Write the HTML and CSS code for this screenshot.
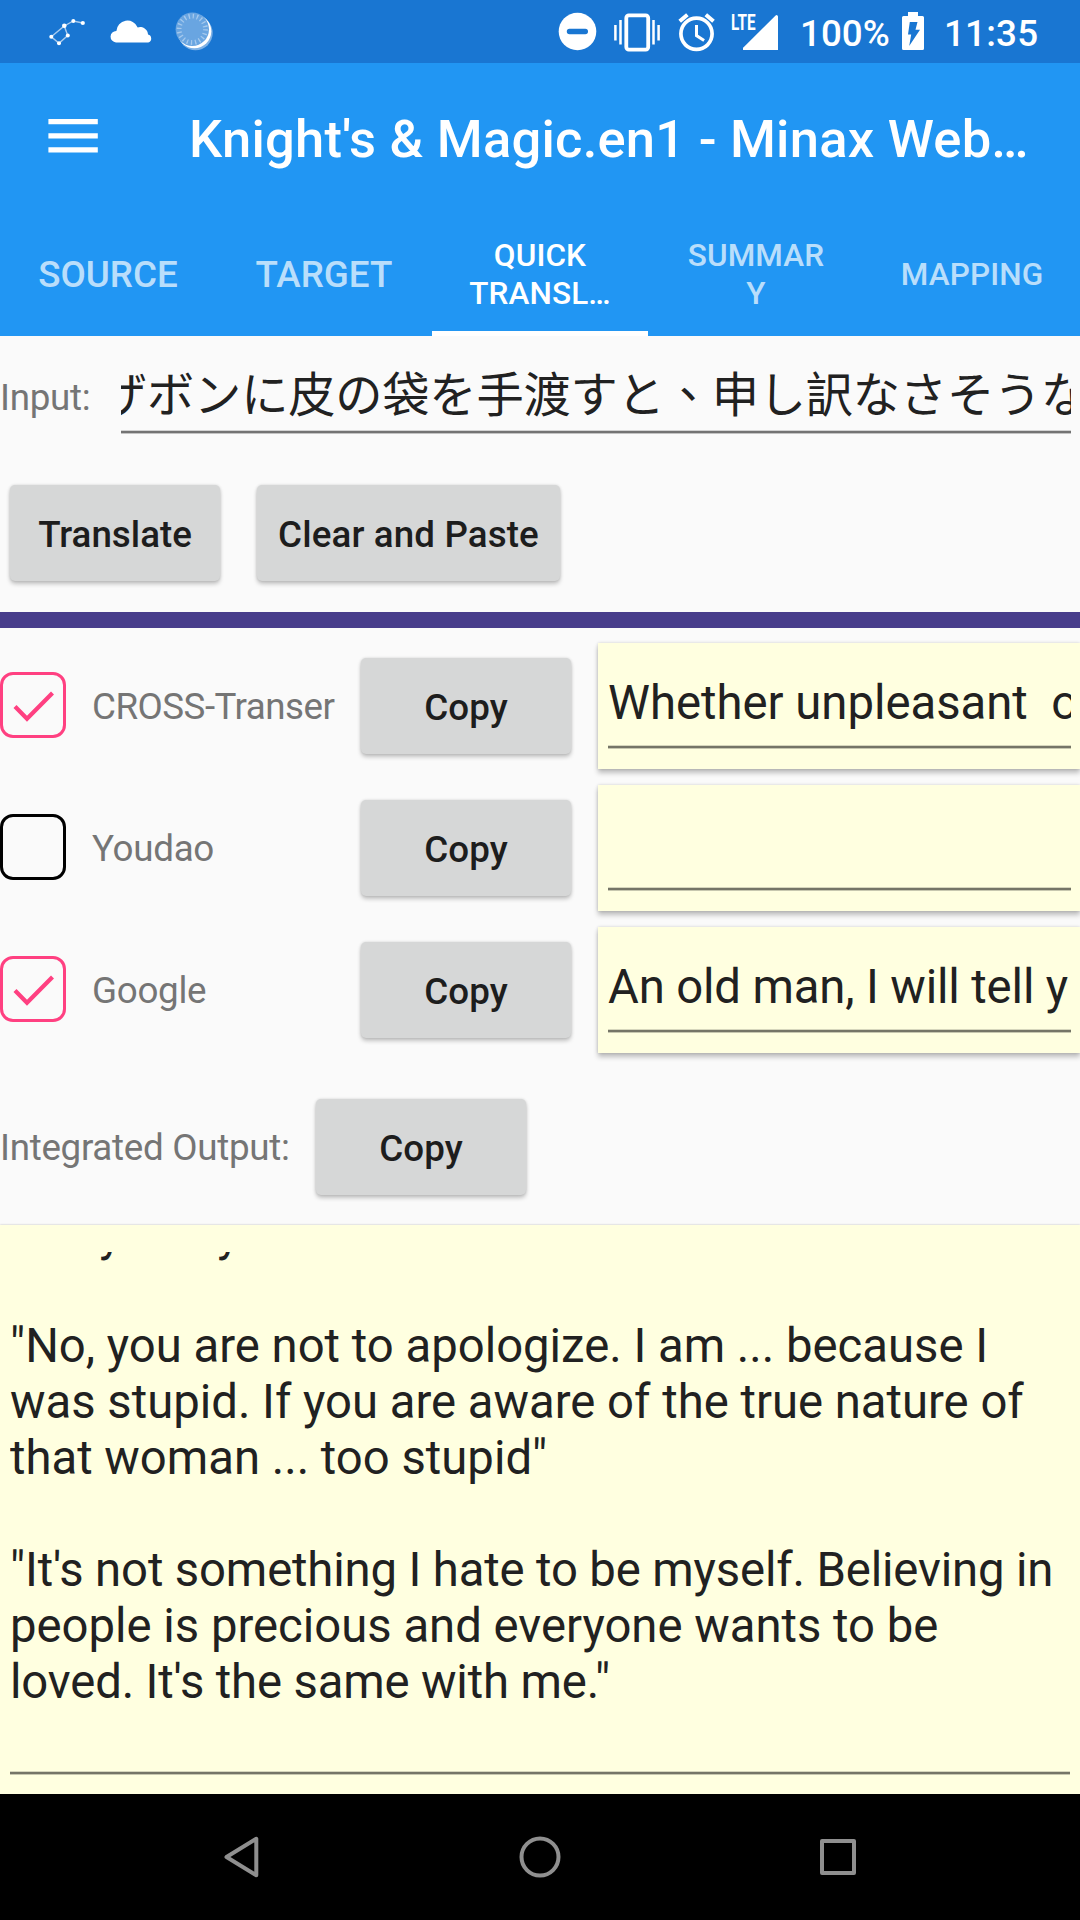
FILE: index.html
```html
<!DOCTYPE html>
<html lang="en">
<head>
<meta charset="utf-8">
<title>Minax Web Translator</title>
<link rel="stylesheet" href="styles.css">
</head>
<body>
<div class="status-bar">
  <div class="status-left">
    <svg width="36" height="32" viewBox="49 15 36 32">
      <path d="M51.3 35.7 64.3 25 67.7 34.5 59 42.2zM64.3 25 73.3 20 82.7 22" fill="none" stroke="#a9cbee" stroke-width="1.4"/>
      <g fill="#fff"><circle cx="51.3" cy="35.7" r="2"/><circle cx="59" cy="42.2" r="2"/><circle cx="67.8" cy="34.5" r="2"/><circle cx="64.3" cy="24.8" r="2.3"/><circle cx="73.3" cy="20" r="2"/><circle cx="82.8" cy="22" r="2.1"/></g>
    </svg>
    <svg width="42" height="24" viewBox="110 18 42 24">
      <path d="M116 41.4a5.4 5.4 0 0 1 .4-11.3 11.1 11.1 0 0 1 21.3-3.7 7.8 7.8 0 0 1 10.3 7.2 4 4 0 0 1 .2 7.8z" fill="#fff"/>
    </svg>
    <svg width="38" height="40" viewBox="175 11 38 40">
      <circle cx="195.5" cy="33" r="17.2" fill="#7fb2e6"/>
      <circle cx="194.3" cy="31.3" r="17" fill="#fff"/>
      <circle cx="192.3" cy="29.3" r="16.7" fill="#69a5e1"/>
      <circle cx="192.3" cy="29.3" r="13.2" fill="none" stroke="#a5c9ed" stroke-width="4.8" stroke-dasharray="1.3 2.847"/>
    </svg>
  </div>
  <div class="status-right">
    <svg width="39" height="39" viewBox="558 12 39 39">
      <circle cx="577.5" cy="31.5" r="18.8" fill="#fff"/>
      <rect x="566.8" y="28.8" width="21.2" height="5.4" rx="2.7" fill="#1976d2"/>
    </svg>
    <svg class="icon-vibrate" width="48" height="40" viewBox="613 11 48 40">
      <rect x="626.3" y="14.4" width="21.9" height="34.2" rx="2.5" fill="none" stroke="#fff" stroke-width="3.8"/>
      <path d="M620.5 19v24.6M615.4 24v15.6M653.5 19v24.6M658.6 24v15.6" stroke="#fff" stroke-width="2.5"/>
    </svg>
    <svg class="icon-alarm" width="38" height="40" viewBox="678 11 38 40">
      <circle cx="696.5" cy="32.8" r="15.6" fill="none" stroke="#fff" stroke-width="3.7"/>
      <path d="M696.5 24v10.6l7.6 4.8" fill="none" stroke="#fff" stroke-width="3"/>
      <path d="M679.7 20.2 687.4 13.7M713.5 20.2 705.8 13.7" stroke="#fff" stroke-width="4"/>
    </svg>
    <div class="signal">
      <span class="lte">LTE</span>
      <svg width="36" height="36" viewBox="743 14 36 36"><path d="M744.3 50a1 1 0 0 1-.9-2.6L775.6 15.4a1.5 1.5 0 0 1 2.4 1V50z" fill="#fff"/></svg>
    </div>
    <span class="battery-level">100%</span>
    <svg class="icon-battery" width="22" height="38" viewBox="902 12 22 38">
      <path d="M908 12h10v4h4.5a1.5 1.5 0 0 1 1.5 1.5V48.5a1.5 1.5 0 0 1-1.5 1.5h-19a1.5 1.5 0 0 1-1.5-1.5V17.5a1.5 1.5 0 0 1 1.5-1.5H908z" fill="#fff"/>
      <path d="M909.8 22h7.7l-2 7.7h4.5L909.2 46l2-11.5H908z" fill="#1976d2"/>
    </svg>
    <span class="clock">11:35</span>
  </div>
</div>

<header class="app-bar">
  <div class="toolbar">
    <svg class="menu" width="50" height="34" viewBox="0 0 50 34"><path d="M.4 2.7h49.4M.4 16.8h49.4M.4 30.9h49.4" stroke="#fff" stroke-width="5.3"/></svg>
    <h1 class="title">Knight's &amp; Magic.en1 - Minax Web…</h1>
  </div>
  <nav class="tabs">
    <div class="tab">SOURCE</div>
    <div class="tab">TARGET</div>
    <div class="tab small active">QUICK<br>TRANSL…</div>
    <div class="tab small">SUMMAR<br>Y</div>
    <div class="tab small">MAPPING</div>
  </nav>
</header>

<main>
  <div class="input-row">
    <label class="label">Input:</label>
    <div class="field"><div class="field-text jp" lang="zh-TW"><span>ザボンに皮の袋を手渡すと、申し訳なさそうな</span></div></div>
  </div>
  <div class="actions">
    <button class="btn">Translate</button>
    <button class="btn wide">Clear and Paste</button>
  </div>
  <div class="divider"></div>

  <section class="engines">
    <div class="engine">
      <span class="check on"><svg width="66" height="66"><path d="M15 34.5 27 46.8 52.5 21" fill="none" stroke="#ff4081" stroke-width="4.2"/></svg></span>
      <span class="label condensed">CROSS-Transer</span>
      <button class="btn">Copy</button>
      <div class="card"><div class="field"><div class="field-text">Whether unpleasant&nbsp; or</div></div></div>
    </div>
    <div class="engine">
      <span class="check"></span>
      <span class="label">Youdao</span>
      <button class="btn">Copy</button>
      <div class="card"><div class="field"><div class="field-text"></div></div></div>
    </div>
    <div class="engine">
      <span class="check on"><svg width="66" height="66"><path d="M15 34.5 27 46.8 52.5 21" fill="none" stroke="#ff4081" stroke-width="4.2"/></svg></span>
      <span class="label">Google</span>
      <button class="btn">Copy</button>
      <div class="card"><div class="field"><div class="field-text tight">An old man, I will tell y</div></div></div>
    </div>
  </section>

  <div class="output-row">
    <span class="label">Integrated Output:</span>
    <button class="btn">Copy</button>
  </div>
  <div class="output">
    <div class="output-text">
      <p>really sorry</p>
      <p>"No, you are not to apologize. I am ... because I<br>was stupid. If you are aware of the true nature of<br>that woman ... too stupid"</p>
      <p><span class="tight">"It's not something I hate to be myself. Believing in</span><br>people is precious and everyone wants to be<br><span class="tight">loved. It's the same with me."</span></p>
    </div>
  </div>
</main>

<footer class="nav-bar">
  <svg width="38" height="44" viewBox="0 0 38 44"><path d="M34.3 3.8v36.4L4.5 22z" fill="none" stroke="#8f8f8f" stroke-width="4" stroke-linejoin="round"/></svg>
  <svg width="44" height="44" viewBox="0 0 44 44"><circle cx="22" cy="22" r="18.5" fill="none" stroke="#8f8f8f" stroke-width="4"/></svg>
  <svg width="38" height="44" viewBox="0 0 38 44"><rect x="3" y="6" width="32" height="32" fill="none" stroke="#8f8f8f" stroke-width="4" stroke-linejoin="round"/></svg>
</footer>
</body>
</html>
```

FILE: styles.css
```css
* { box-sizing: border-box; }

body {
  margin: 0;
  width: 1080px;
  height: 1920px;
  overflow: hidden;
  background: #fafafa;
  font-family: Roboto, "Noto Sans CJK TC", sans-serif;
  display: flex;
  flex-direction: column;
}

svg { display: block; flex: none; }

/* System status bar */
.status-bar {
  height: 63px;
  background: #1976d2;
  color: #fff;
  display: flex;
  justify-content: space-between;
  font-size: 36.75px;
  font-weight: 500;
  line-height: 43px;
}
.status-left { display: flex; align-items: center; padding-left: 49px; }
.status-left svg + svg { margin: -2px 0 0 25px; }
.status-left svg:last-child { margin-left: 23px; }
.status-right { display: flex; align-items: center; width: 522px; }
.icon-vibrate { margin-left: 16px; }
.icon-alarm { margin-left: 17px; }
.signal { position: relative; width: 46px; height: 36px; margin: 1px 0 0 17px; }
.signal svg { margin-left: 10px; }
.lte {
  position: absolute;
  left: -2px;
  top: -4px;
  font-size: 22.5px;
  line-height: 24px;
  font-weight: 700;
  transform: scaleX(0.68);
  transform-origin: 0 0;
}
.battery-level { width: 101px; margin-left: 21px; padding-top: 3px; }
.icon-battery { margin: -1px 0 0 1px; }
.clock { margin-left: 20px; padding-top: 3px; white-space: nowrap; letter-spacing: 0.2px; }

/* App bar */
.app-bar { height: 273px; background: #2196f3; color: #fff; }
.toolbar { height: 147px; display: flex; align-items: center; padding-left: 48px; }
.menu { margin-top: -2px; }
.title {
  margin: 4px 0 0 91px;
  font-size: 52.5px;
  font-weight: 500;
  line-height: 62px;
  letter-spacing: 0.23px;
  white-space: nowrap;
}
.tabs { height: 126px; display: grid; grid-template-columns: repeat(5, 216px); }
.tab {
  display: flex;
  align-items: center;
  justify-content: center;
  text-align: center;
  font-size: 36.75px;
  font-weight: 500;
  line-height: 44px;
  padding-top: 3px;
  color: rgba(255, 255, 255, 0.7);
}
.tab.small { font-size: 31.5px; line-height: 38px; padding-top: 4px; letter-spacing: 0.12px; }
.tab.active { color: #fff; box-shadow: inset 0 -5px #fff; }

/* Shared controls */
.label {
  font-size: 36.75px;
  line-height: 44px;
  letter-spacing: -0.3px;
  color: #757575;
  white-space: nowrap;
}
.label.condensed { letter-spacing: -0.52px; }
.tight { letter-spacing: -0.14px; }
.btn {
  width: 210px;
  height: 96px;
  flex: none;
  padding: 4px 0 0;
  border: 0;
  border-radius: 5px;
  background: #d6d7d7;
  color: #1d1d1d;
  font: 500 36.75px/44px Roboto, sans-serif;
  box-shadow: 0 3px 4px rgba(0, 0, 0, 0.22), 0 0 3px rgba(0, 0, 0, 0.14);
}
.btn.wide { width: 303px; letter-spacing: 0.12px; }
.field,
.output-text {
  --line: rgba(0, 0, 0, 0.54);
  overflow: hidden;
  background:
    linear-gradient(var(--line), var(--line)) 0 calc(100% - 1px) / 100% 2px no-repeat,
    linear-gradient(rgba(0, 0, 0, 0.16), rgba(0, 0, 0, 0.16)) 0 calc(100% - 3px) / 100% 1px no-repeat,
    linear-gradient(rgba(0, 0, 0, 0.22), rgba(0, 0, 0, 0.22)) 0 100% / 100% 1px no-repeat;
}
.field-text {
  height: 56px;
  font-size: 47.25px;
  line-height: 56px;
  color: #212121;
  white-space: nowrap;
}

.input-row { height: 148px; display: flex; }
.input-row .label { width: 121px; padding-top: 40px; }
.input-row .field { width: 950px; height: 98px; padding-top: 32px; }
.field-text.jp { letter-spacing: -0.2px; }
.jp span { margin-left: -21px; }

.actions { height: 128px; display: flex; gap: 37px; padding: 1px 0 0 10px; }
.divider { height: 16px; background: #483d8b; }

/* Translation engines */
.engines { display: flex; flex-direction: column; gap: 16px; padding: 15px 0 16px; }
.engine {
  height: 126px;
  display: grid;
  grid-template-columns: 92px 269px 237px 482px;
  align-items: center;
}
.engine .label { padding-top: 2px; }
.check {
  width: 66px;
  height: 66px;
  margin-top: -2px;
  border: 3px solid #000;
  border-radius: 13px;
}
.check.on { border-color: #ff4081; }
.check svg { margin: -3px; }
.card {
  height: 126px;
  padding: 32px 9px 0 10px;
  background: #ffffe0;
  box-shadow: 0 4px 5px rgba(0, 0, 0, 0.24), 0 0 3px rgba(0, 0, 0, 0.16);
}
.card .field { height: 74px; }

/* Integrated output */
.output-row { height: 156px; display: flex; padding-top: 30px; }
.output-row .label { width: 316px; padding-top: 27px; }
.output {
  height: 569px;
  padding: 27px 10px 19px;
  background: #ffffe0;
  box-shadow: 0 0 2px rgba(0, 0, 0, 0.25);
}
.output-text {
  height: 523px;
  font-size: 47.25px;
  line-height: 56px;
  color: #212121;
  white-space: nowrap;
}
.output-text p { margin: 0 0 56px; }
.output-text p:first-child { margin-top: -46px; }

/* System navigation */
.nav-bar {
  height: 126px;
  flex: none;
  margin-top: auto;
  background: #000;
  display: flex;
  align-items: center;
  justify-content: space-between;
  padding: 0 223px 0 222px;
  position: relative;
}
```
